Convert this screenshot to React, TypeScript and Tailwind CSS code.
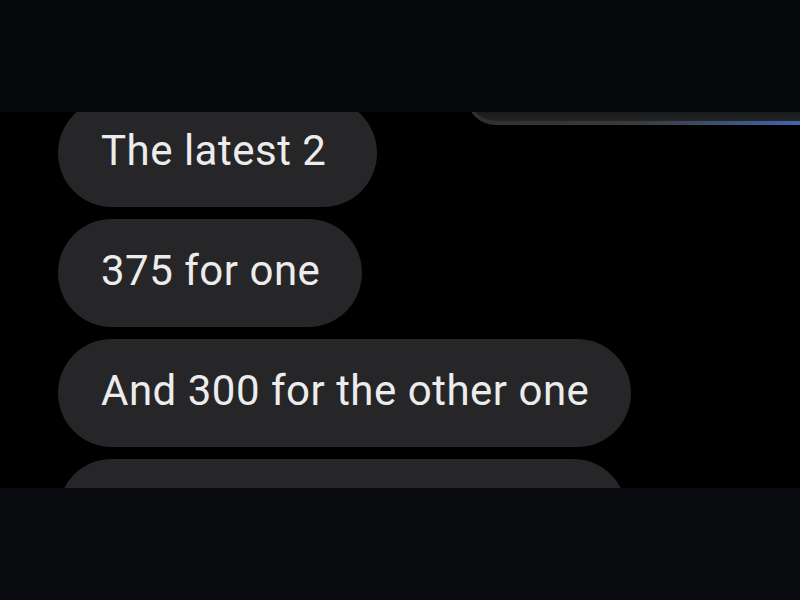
import React from "react";

const bubbles = ["The latest 2", "375 for one", "And 300 for the other one", ""];

export default function App() {
  return (
    <div className="w-[800px] h-[600px] flex flex-col bg-black overflow-hidden" style={{ fontFamily: "Roboto, 'Noto Sans', sans-serif" }}>
      <div className="h-[112px] shrink-0 bg-[#06070b]" />
      <div className="relative h-[376px] shrink-0 overflow-hidden">
        <div className="absolute left-[466px] top-[-40px] w-[350px] h-[53px] rounded-bl-[30px] bg-gradient-to-r from-[#2e2f31] via-[#3a3b3d] via-50% to-[#3f68bc]">
          <div className="absolute left-[1px] top-0 right-0 bottom-[4px] rounded-bl-[29px] bg-gradient-to-b from-[#0c0d10] via-[#141517] via-70% to-[#232426]" />
        </div>
        <div className="flex flex-col items-start gap-[12px] pl-[58px] mt-[-13px]">
          {bubbles.map((t, i) => (
            <div
              key={i}
              className={`h-[108px] shrink-0 rounded-full bg-[#262629] flex items-center pl-[43px] pb-[5px] text-[42px] tracking-[0.5px] text-[#ececec] whitespace-nowrap ${i === 3 ? "w-[569px]" : ""} ${i === 0 ? "pr-[51px]" : "pr-[42px]"}`}
            >
              {t}
            </div>
          ))}
        </div>
      </div>
      <div className="h-[112px] shrink-0 bg-[#0a0b0e]" />
    </div>
  );
}
